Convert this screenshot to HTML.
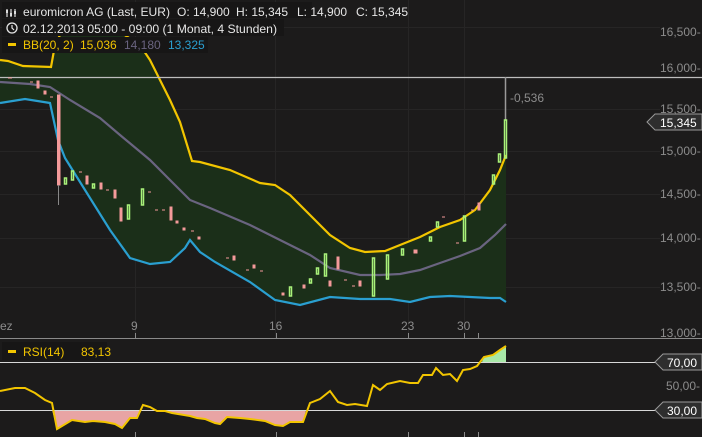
<!DOCTYPE html>
<html><head><meta charset="utf-8"><style>
html,body{margin:0;padding:0;background:#1c1b1b;}
body{width:702px;height:437px;overflow:hidden;position:relative;font-family:"Liberation Sans",sans-serif;}
svg{position:absolute;left:0;top:0;}
.t{font-family:"Liberation Sans",sans-serif;font-size:12px;}
</style></head><body>
<svg width="702" height="437" viewBox="0 0 702 437" xmlns="http://www.w3.org/2000/svg">
<rect width="702" height="437" fill="#1c1b1b"/>
<g stroke="#262525" stroke-width="1">
<line x1="0" y1="109.5" x2="660" y2="109.5"/><line x1="0" y1="151.5" x2="660" y2="151.5"/>
<line x1="0" y1="194.5" x2="660" y2="194.5"/><line x1="0" y1="238.5" x2="660" y2="238.5"/>
<line x1="0" y1="287.5" x2="660" y2="287.5"/><line x1="0" y1="27.5" x2="660" y2="27.5"/>
<line x1="135.5" y1="0" x2="135.5" y2="338"/><line x1="275.5" y1="0" x2="275.5" y2="338"/>
<line x1="408.5" y1="0" x2="408.5" y2="338"/><line x1="464.5" y1="0" x2="464.5" y2="338"/>
</g>
<path fill="#1b2f19" d="M0,60 L8,61 L23,66 L51,67 L55,45 L60,35 L80,32 L120,32 L140,45 L150,60 L160,80 L170,100 L180,122 L192,161 L200,162 L230,170 L260,183 L275,185 L290,195 L310,215 L330,235 L350,248 L365,252 L385,251 L405,243 L420,237 L440,227 L460,220 L475,210 L490,190 L500,170 L506,155 L506,302 L500,298 L490,298 L470,297 L450,296 L430,297 L410,302 L390,299 L360,299 L330,297 L300,305 L275,300 L250,282 L215,262 L200,252 L190,240 L185,248 L170,262 L150,264 L130,258 L110,230 L85,190 L65,158 L58,140 L50,103 L25,99 L0,103 Z"/>
<polyline fill="none" stroke="#f2c500" stroke-width="2.2" points="0,60 8,61 23,66 51,67 55,45 60,35 80,32 120,32 140,45 150,60 160,80 170,100 180,122 192,161 200,162 230,170 260,183 275,185 290,195 310,215 330,235 350,248 365,252 385,251 405,243 420,237 440,227 460,220 475,210 490,190 500,170 506,155"/>
<polyline fill="none" stroke="#6a6480" stroke-width="2.2" points="0,82 30,84 50,87 70,100 100,118 120,135 150,160 170,180 190,200 210,208 250,225 280,240 310,255 330,268 360,275 380,275 400,274 420,270 440,263 460,256 480,248 495,235 506,224"/>
<polyline fill="none" stroke="#2a9fd0" stroke-width="2.2" points="0,103 25,99 50,103 58,140 65,158 85,190 110,230 130,258 150,264 170,262 185,248 190,240 200,252 215,262 250,282 275,300 300,305 330,297 360,299 390,299 410,302 430,297 450,296 470,297 490,298 500,298 506,302"/>
<line x1="0" y1="77.5" x2="702" y2="77.5" stroke="#bdbdbd" stroke-width="1.2"/>
<line x1="505.5" y1="77" x2="505.5" y2="120" stroke="#9a9a9a" stroke-width="1.5"/>
<g stroke-width="1">
<g fill="#f49a9a" stroke="#f49a9a">
<rect x="37" y="81" width="2" height="7"/><rect x="44" y="91" width="2" height="3"/><rect x="57.5" y="95" width="2.5" height="90"/>
<line x1="58.5" y1="185" x2="58.5" y2="205" stroke="#888"/>
<rect x="86" y="176" width="2" height="8"/><rect x="100" y="183" width="2" height="6"/><rect x="114" y="190" width="2" height="8"/>
<rect x="120" y="208" width="2" height="13"/><rect x="170" y="207" width="2" height="13"/><rect x="176" y="221" width="2" height="2"/>
<rect x="183" y="228" width="2" height="2"/><rect x="198" y="237" width="2" height="2"/><rect x="253" y="265" width="2" height="3"/>
<rect x="282" y="293" width="2" height="2"/><rect x="303" y="285" width="2" height="3"/><rect x="337" y="257" width="2" height="12"/>
<rect x="359" y="281" width="2" height="5"/><rect x="414" y="250" width="3" height="3"/><rect x="478" y="203" width="2" height="7"/><rect x="329" y="281" width="2" height="5"/>
<rect x="233" y="256" width="2" height="4"/>
</g>
<g fill="none" stroke="#a9f27a" stroke-width="1.5">
<rect x="64.5" y="178" width="2" height="6"/><rect x="71.5" y="171" width="2" height="9"/><rect x="92.5" y="184" width="2" height="4"/>
<rect x="127.5" y="205" width="2" height="14"/><rect x="141.5" y="189" width="2" height="16"/><rect x="289.5" y="287" width="2" height="9"/>
<rect x="316.5" y="268" width="2" height="6"/><rect x="324.5" y="254" width="2" height="22"/><rect x="372.5" y="258" width="2" height="38"/>
<rect x="386.5" y="255" width="2" height="24"/><rect x="401.5" y="249" width="2" height="6"/><rect x="429.5" y="237" width="2" height="4"/>
<rect x="463.5" y="216" width="2" height="25"/><rect x="492.5" y="175" width="2" height="9"/><rect x="498.5" y="154" width="2" height="8"/>
<rect x="504.5" y="120" width="2" height="38"/><rect x="436.5" y="222" width="2" height="5"/><rect x="309.5" y="279" width="2" height="4"/>
</g>
<g stroke="#f49a9a"><line x1="8" y1="78" x2="12" y2="78"/><line x1="30" y1="82" x2="33" y2="82"/><line x1="50" y1="97" x2="53" y2="97"/><line x1="79" y1="172" x2="82" y2="172"/><line x1="106" y1="190" x2="109" y2="190"/><line x1="148" y1="192" x2="151" y2="192"/><line x1="155" y1="210" x2="158" y2="210"/><line x1="162" y1="210" x2="165" y2="210"/><line x1="191" y1="231" x2="194" y2="231"/><line x1="226" y1="258" x2="229" y2="258"/><line x1="246" y1="270" x2="249" y2="270"/><line x1="260" y1="271" x2="263" y2="271"/><line x1="344" y1="280" x2="347" y2="280"/><line x1="352" y1="286" x2="355" y2="286"/><line x1="442" y1="217" x2="445" y2="217"/><line x1="456" y1="243" x2="459" y2="243"/><line x1="471" y1="210" x2="474" y2="210"/></g>
</g>
<line x1="0" y1="338.5" x2="702" y2="338.5" stroke="#8a8a8a"/>
<g stroke="#8a8a8a"><line x1="135.5" y1="333" x2="135.5" y2="338"/><line x1="276.5" y1="333" x2="276.5" y2="338"/><line x1="408.5" y1="333" x2="408.5" y2="338"/><line x1="464.5" y1="333" x2="464.5" y2="338"/><line x1="478.5" y1="333" x2="478.5" y2="338"/>
<line x1="135.5" y1="432" x2="135.5" y2="437"/><line x1="276.5" y1="432" x2="276.5" y2="437"/><line x1="408.5" y1="432" x2="408.5" y2="437"/><line x1="464.5" y1="432" x2="464.5" y2="437"/><line x1="478.5" y1="432" x2="478.5" y2="437"/></g>
<g class="t" fill="#8c8c8c" font-size="12">
<text x="0" y="330">ez</text><text x="131" y="330">9</text><text x="269" y="330">16</text><text x="401" y="330">23</text><text x="457" y="330">30</text>
<text x="660" y="36">16,500-</text><text x="660" y="72">16,000-</text><text x="660" y="113">15,500-</text><text x="660" y="155">15,000-</text><text x="660" y="198">14,500-</text><text x="660" y="242">14,000-</text><text x="660" y="291">13,500-</text><text x="660" y="337">13,000-</text>
<text x="666" y="390">50,00-</text>
<text x="510" y="102">-0,536</text>
</g>
<path d="M647,122 L655,114 L702,114 L702,130 L655,130 Z" fill="#2e2e2e" stroke="#9a9a9a"/>
<text class="t" x="660" y="127" fill="#fff" font-size="12">15,345</text>
<path fill="#e8a4a4" d="M52,410 L57,429 L72,420 L85,422 L93,421 L105,422 L115,424 L122,428 L130,418 L137,418 L141,410 Z M154,410 L157,411 L165,411 L172,413 L190,416 L197,418 L205,419 L215,423 L220,424 L227,417 L240,418 L250,419 L265,421 L275,425 L283,426 L290,422 L303,422 L306,410 Z"/>
<path fill="#a8e8a8" d="M482,362 L484,357 L493,355 L500,350 L506,346 L506,362 Z"/>
<line x1="0" y1="362.5" x2="660" y2="362.5" stroke="#d8d8d8"/>
<line x1="0" y1="410.5" x2="660" y2="410.5" stroke="#d8d8d8"/>
<polyline fill="none" stroke="#f2c500" stroke-width="2" points="0,391 15,388 25,388 35,393 45,400 52,403 57,429 72,420 85,422 93,421 105,422 115,424 122,428 130,418 137,418 143,405 150,407 157,411 165,411 172,413 190,416 197,418 205,419 215,423 220,424 227,417 240,418 250,419 265,421 275,425 283,426 290,422 303,422 310,403 320,399 330,391 338,402 347,405 355,404 367,406 373,385 380,390 387,384 400,381 410,383 418,383 423,375 432,375 436,368 443,375 450,374 457,381 463,370 470,369 477,366 484,357 493,355 500,350 506,346"/>
<path d="M655,362 L663,354 L702,354 L702,370 L663,370 Z" fill="#2e2e2e" stroke="#9a9a9a"/>
<text class="t" x="667" y="367" fill="#fff">70,00</text>
<path d="M655,410 L663,402 L702,402 L702,418 L663,418 Z" fill="#2e2e2e" stroke="#9a9a9a"/>
<text class="t" x="667" y="415" fill="#fff">30,00</text>
<rect x="2" y="342" width="105" height="18" fill="#171616"/>
<rect x="8" y="350" width="8" height="3" fill="#f2c500"/>
<text class="t" x="23" y="356" fill="#f2c500">RSI(14)</text><text class="t" x="81" y="356" fill="#f2c500">83,13</text>
<rect x="2" y="2" width="310" height="16" fill="#171616"/>
<rect x="2" y="19" width="282" height="17" fill="#171616"/>
<rect x="2" y="37" width="206" height="16" fill="#171616"/>
<g stroke="#ddd" stroke-width="1.2" fill="none"><line x1="7" y1="9" x2="7" y2="17"/><line x1="11" y1="9" x2="11" y2="17"/><line x1="15" y1="9" x2="15" y2="17"/></g>
<g fill="#ddd"><rect x="6" y="10" width="2" height="3"/><rect x="10" y="13" width="2" height="3"/><rect x="14" y="11" width="2" height="3"/></g>
<g class="t" fill="#e6e6e6" font-size="12.5">
<text x="23" y="16" textLength="147" lengthAdjust="spacingAndGlyphs">euromicron AG (Last, EUR)</text>
<text x="177" y="16">O: 14,900</text><text x="236" y="16">H: 15,345</text><text x="297" y="16">L: 14,900</text><text x="356" y="16">C: 15,345</text>
<text x="23" y="33" textLength="254" lengthAdjust="spacingAndGlyphs">02.12.2013 05:00 - 09:00 (1 Monat, 4 Stunden)</text>
</g>
<circle cx="12" cy="28" r="5" fill="none" stroke="#e6e6e6" stroke-width="1.3"/><path d="M12,25 L12,28 L14,30" stroke="#e6e6e6" fill="none" stroke-width="1.2"/>
<rect x="8" y="43" width="8" height="3" fill="#f2c500"/>
<g class="t" font-size="12.5">
<text x="23" y="49" fill="#f2c500">BB(20, 2)</text>
<text x="80" y="49" fill="#f2c500">15,036</text>
<text x="124" y="49" fill="#6a6480">14,180</text>
<text x="168" y="49" fill="#2a9fd0">13,325</text>
</g>
</svg>
</body></html>
